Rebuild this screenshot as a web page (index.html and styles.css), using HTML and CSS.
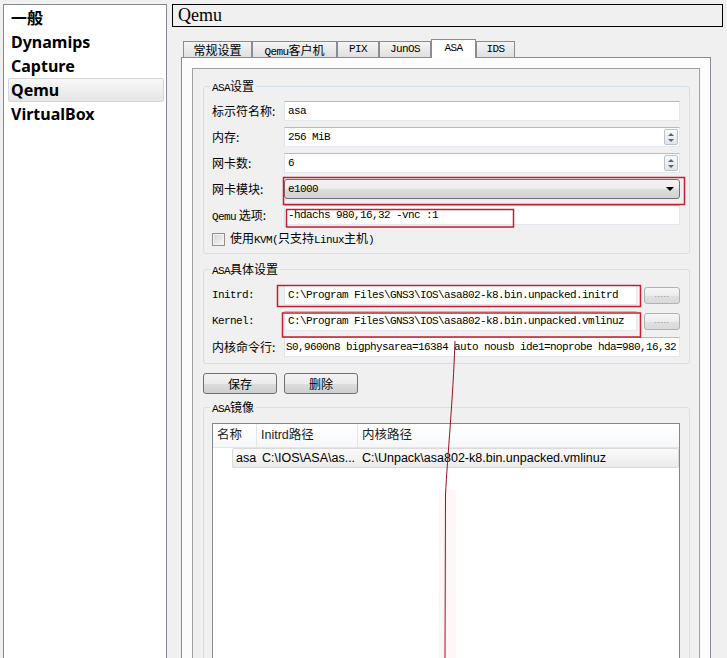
FILE: index.html
```html
<!DOCTYPE html>
<html>
<head>
<meta charset="utf-8">
<title>Qemu</title>
<link rel="stylesheet" href="styles.css">
</head>
<body>
<div class="app">
  <ul class="nav">
    <li>一般</li>
    <li>Dynamips</li>
    <li>Capture</li>
    <li class="sel">Qemu</li>
    <li>VirtualBox</li>
  </ul>
  <div class="main">
    <div class="title">Qemu</div>
    <div class="tabw">
      <div class="tabbar">
        <div class="tab w1">常规设置</div>
        <div class="tab w2"><span class="m">Qemu</span>客户机</div>
        <div class="tab w3 m">PIX</div>
        <div class="tab w4 m">JunOS</div>
        <div class="tab w5 m active">ASA</div>
        <div class="tab w6 m">IDS</div>
      </div>
      <div class="pane">
        <div class="frame">
          <fieldset class="grp g1">
            <legend><span class="m">ASA</span>设置</legend>
            <div class="row"><span class="lbl">标示符名称:</span><div class="field m">asa</div></div>
            <div class="row"><span class="lbl">内存:</span><div class="field spin"><span class="txt m">256 MiB</span><span class="arrows"><i class="up"></i><i class="dn"></i></span></div></div>
            <div class="row"><span class="lbl">网卡数:</span><div class="field spin"><span class="txt m">6</span><span class="arrows"><i class="up"></i><i class="dn"></i></span></div></div>
            <div class="row"><span class="lbl">网卡模块:</span><div class="combo"><span class="txt m">e1000</span><i class="caret"></i></div></div>
            <div class="row"><span class="lbl"><span class="m">Qemu</span> 选项:</span><div class="field m">-hdachs 980,16,32 -vnc :1</div></div>
            <div class="chkrow"><span class="box"></span><span>使用<span class="m">KVM(</span>只支持<span class="m">Linux</span>主机<span class="m">)</span></span></div>
          </fieldset>
          <fieldset class="grp g2">
            <legend><span class="m">ASA</span>具体设置</legend>
            <div class="row"><span class="lbl m">Initrd:</span><div class="field short m">C:\Program Files\GNS3\IOS\asa802-k8.bin.unpacked.initrd</div><div class="dots">.....</div></div>
            <div class="row"><span class="lbl m">Kernel:</span><div class="field short m">C:\Program Files\GNS3\IOS\asa802-k8.bin.unpacked.vmlinuz</div><div class="dots">.....</div></div>
            <div class="row"><span class="lbl">内核命令行:</span><div class="field m tight">S0,9600n8 bigphysarea=16384 auto nousb ide1=noprobe hda=980,16,32</div></div>
          </fieldset>
          <div class="btns"><div class="btn">保存</div><div class="btn">删除</div></div>
          <fieldset class="grp g3">
            <legend><span class="m">ASA</span>镜像</legend>
            <div class="tree">
              <div class="thead">
                <div class="th c1">名称</div>
                <div class="th c2">Initrd路径</div>
                <div class="th c3">内核路径</div>
              </div>
              <div class="tr">
                <div class="td d1">asa</div>
                <div class="td d2">C:\IOS\ASA\as...</div>
                <div class="td d3">C:\Unpack\asa802-k8.bin.unpacked.vmlinuz</div>
              </div>
            </div>
          </fieldset>
        </div>
      </div>
    </div>
  </div>
</div>
<svg class="marks" width="727" height="658" viewBox="0 0 727 658">
  <rect class="glow" x="439" y="490" width="17" height="168"/>
  <rect class="mk" x="283.5" y="177.5" width="401" height="27"/>
  <rect class="mk" x="286.5" y="209.5" width="227" height="17.5"/>
  <rect class="mk" x="277.5" y="285.5" width="363" height="21"/>
  <rect class="mk" x="282.5" y="313" width="358" height="24"/>
  <path class="ln" d="M455,341 C453,400 447.5,455 445.5,495 L445,658"/>
</svg>
</body>
</html>
```

FILE: styles.css
```css
* { box-sizing: border-box; }
html, body { margin: 0; padding: 0; }
body {
  background: #f0f0f0;
  font-family: "Noto Sans CJK SC", sans-serif;
  font-size: 12px;
  color: #000;
  overflow: hidden;
  width: 727px;
  height: 658px;
}
.app {
  display: flex;
  gap: 5px;
  padding: 4px 4px 0 3px;
  height: 658px;
  overflow: hidden;
}
.nav {
  list-style: none;
  margin: 0;
  width: 164px;
  flex: none;
  background: #fff;
  border: 1px solid #828790;
  border-bottom: none;
  padding: 1px 2px 0 4px;
}
.nav li {
  height: 24px;
  line-height: 24px;
  padding-left: 3px;
  font-family: "Noto Sans", "Noto Sans CJK SC", sans-serif;
  font-weight: 700;
  font-size: 16px;
}
.nav li.sel {
  background: linear-gradient(#f8f8f8, #e5e5e5);
  border: 1px solid #d6d6d6;
  border-radius: 2px;
  padding-left: 2px;
  line-height: 22px;
}
.main {
  flex: 1;
  min-width: 0;
  display: flex;
  flex-direction: column;
}
.title {
  height: 23px;
  border: 1px solid #000;
  font-family: "Liberation Serif", serif;
  font-size: 18px;
  line-height: 21px;
  padding-left: 5px;
}
.m {
  font-family: "Liberation Mono", "Noto Sans CJK SC", monospace;
  font-size: 11px;
  letter-spacing: -0.6px;
}
.tabw {
  margin: 12px 12px 0 9px;
  flex: 1;
  display: flex;
  flex-direction: column;
}
.tabbar {
  display: flex;
  align-items: flex-end;
  height: 19px;
  border-bottom: 1px solid #898c95;
  padding-left: 2px;
}
.tab {
  height: 16px;
  border: 1px solid #898c95;
  border-bottom: none;
  background: linear-gradient(#f4f4f4, #e0e0e0);
  text-align: center;
  line-height: 15px;
  white-space: nowrap;
  flex: none;
}
.tab.active {
  height: 19px;
  margin-bottom: -1px;
  background: #fff;
  line-height: 17px;
}
.w1 { width: 69px; }
.w2 { width: 85px; }
.w3 { width: 42px; }
.w4 { width: 52px; }
.w5 { width: 45px; }
.w6 { width: 39px; }
.pane {
  flex: 1;
  display: flex;
  flex-direction: column;
  border: 1px solid #898c95;
  border-top: none;
  background: #fcfcfc;
  padding: 10px 10px 0 10px;
}
.frame {
  flex: 1;
  border: 1px solid #a0a0a0;
  border-bottom: none;
  background: #f0f0f0;
  padding: 9px 9px 0 10px;
}
fieldset.grp {
  margin: 0;
  min-width: 0;
  border: 1px solid #d5dfe5;
  border-radius: 3px;
  padding: 7px 9px 6px 8px;
}
fieldset.grp legend {
  padding: 0 2px;
  margin-left: -2px;
  height: 16px;
  line-height: 16px;
  font-size: 12px;
  white-space: nowrap;
}
.g2 { margin-top: 7px !important; padding-top: 8px !important; }
.g3 { margin-top: 5px !important; padding-top: 8px !important; }
.row {
  display: flex;
  align-items: center;
  height: 20px;
}
.row + .row { margin-top: 6px; }
.lbl {
  width: 72px;
  flex: none;
  white-space: nowrap;
  height: 20px;
  line-height: 20px;
}
.field {
  flex: 1;
  min-width: 0;
  height: 20px;
  background: #fff;
  border: 1px solid #e3e9ef;
  border-top-color: #b5b9c0;
  border-left-color: #e2e3ea;
  padding: 0 3px;
  line-height: 18px;
  white-space: nowrap;
  overflow: hidden;
}
.field.tight { padding-left: 1px; }
.spin {
  display: flex;
  align-items: center;
  padding-right: 1px;
}
.spin .txt { flex: 1; }
.arrows {
  width: 14px;
  height: 16px;
  border: 1px solid #b9c2ca;
  border-radius: 2px;
  background: linear-gradient(#f7f9fb, #dfe5ea);
  display: flex;
  flex-direction: column;
  align-items: center;
  justify-content: space-around;
  padding: 1px 0;
}
.up, .dn { display: block; width: 0; height: 0; border-left: 3px solid transparent; border-right: 3px solid transparent; }
.up { border-bottom: 3px solid #56647c; }
.dn { border-top: 3px solid #56647c; }
.combo {
  flex: 1;
  height: 20px;
  border: 1px solid #707070;
  border-radius: 3px;
  background: linear-gradient(#f3f3f3, #ebebeb 50%, #dddddd 51%, #d2d2d2);
  display: flex;
  align-items: center;
  padding: 0 5px 0 3px;
}
.combo .txt { flex: 1; }
.caret {
  display: block;
  width: 0;
  height: 0;
  border-left: 4px solid transparent;
  border-right: 4px solid transparent;
  border-top: 4px solid #000;
}
.chkrow {
  display: flex;
  align-items: center;
  height: 16px;
  margin-top: 6px;
  white-space: nowrap;
  line-height: 16px;
}
.box {
  width: 13px;
  height: 13px;
  border: 1px solid #8e8f8f;
  background: linear-gradient(135deg, #d4d4d4, #f8f8f8);
  box-shadow: inset 0 0 0 1px #f4f4f4;
  margin-right: 5px;
  flex: none;
}
.field.short { flex: none; width: 353px; }
.dots {
  margin-left: 7px;
  width: 36px;
  height: 17px;
  border: 1px solid #adb2b5;
  border-radius: 3px;
  background: linear-gradient(#f6f6f6, #ececec 50%, #e0e0e0 51%, #dadada);
  color: #8a8a8a;
  font-family: "Liberation Sans", sans-serif;
  font-size: 9px;
  text-align: center;
  line-height: 12px;
  letter-spacing: 0.5px;
}
.btns {
  display: flex;
  gap: 7px;
  margin-top: 9px;
}
.btn {
  width: 74px;
  height: 21px;
  border: 1px solid #707070;
  border-radius: 3px;
  background: linear-gradient(#f3f3f3, #ebebeb 50%, #dddddd 51%, #cfcfcf);
  text-align: center;
  line-height: 19px;
}
.tree {
  border: 1px solid #828790;
  background: #fff;
  height: 270px;
  font-family: "Liberation Sans", "Noto Sans CJK SC", sans-serif;
  font-size: 12.5px;
}
.thead {
  display: flex;
  height: 24px;
  border-bottom: 1px solid #e5e5e5;
  background: linear-gradient(#ffffff, #f6f7f9);
}
.th {
  line-height: 23px;
  border-right: 1px solid #e5e5e5;
  color: #222;
  white-space: nowrap;
}
.c1 { width: 44px; padding-left: 4px; }
.c2 { width: 101px; padding-left: 4px; }
.c3 { flex: 1; padding-left: 4px; border-right: none; }
.tr {
  display: flex;
  height: 20px;
  margin-left: 19px;
  background: linear-gradient(#fafafa, #ebebeb);
  border: 1px solid #dadada;
  border-radius: 2px;
  line-height: 18px;
  white-space: nowrap;
}
.d1 { width: 24px; padding-left: 3px; }
.d2 { width: 101px; padding-left: 5px; overflow: hidden; }
.d3 { flex: 1; padding-left: 4px; }
.marks {
  position: absolute;
  left: 0;
  top: 0;
  pointer-events: none;
}
.mk { fill: none; stroke: #c21f30; stroke-width: 1.5; }
.ln { fill: none; stroke: #9b1020; stroke-width: 1; }
.glow { fill: #ff0000; opacity: 0.03; }
```
